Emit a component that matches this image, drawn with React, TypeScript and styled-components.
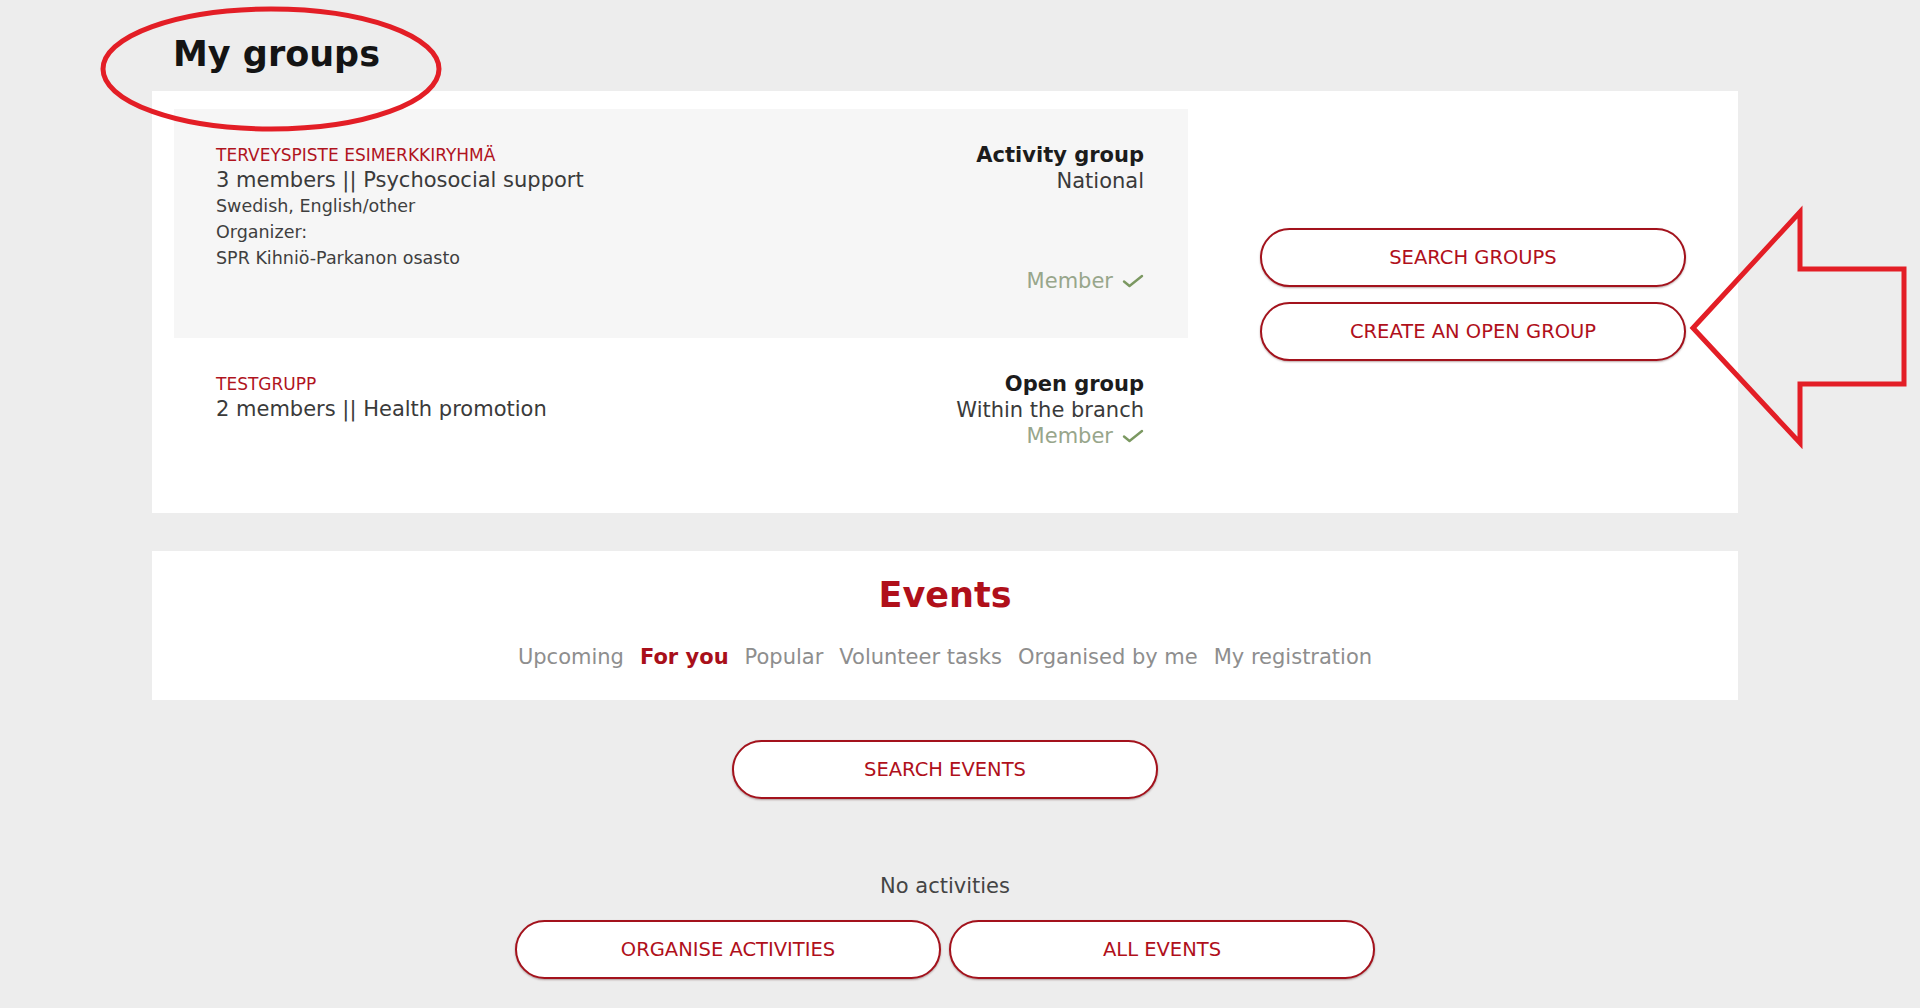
import styled, { createGlobalStyle } from 'styled-components';

const GlobalStyle = createGlobalStyle`
  html, body {
    margin: 0;
    padding: 0;
    background: #ededed;
  }
  body {
    font-family: "DejaVu Sans", "Liberation Sans", sans-serif;
    color: #3a3a3a;
  }
  * { box-sizing: border-box; }
`

const Page = styled.div`
  position: relative;
  width: 1920px;
  min-height: 1008px;
  padding: 34px 0 0 152px;
`

const Content = styled.div`
  width: 1586px;
`

const PageTitle = styled.h1`
  margin: 0 0 16px 21px;
  font-size: 35px;
  line-height: 41px;
  font-weight: 700;
  color: #141414;
`

const GroupsPanel = styled.section`
  display: flex;
  align-items: flex-start;
  gap: 72px;
  padding: 18px 52px 20px 22px;
  background: #fff;
`

const GroupList = styled.div`
  width: 1014px;
  display: flex;
  flex-direction: column;
`

const GroupCard = styled.div<{ $highlight?: boolean }>`
  display: flex;
  justify-content: space-between;
  padding: 32px 44px 44px 42px;
  background: ${p => (p.$highlight ? '#f6f6f6' : 'transparent')};
`

const GroupInfo = styled.div`
  display: flex;
  flex-direction: column;
  padding-top: 2px;
`

const GroupName = styled.div`
  font-size: 17px;
  line-height: 25px;
  color: #b0141e;
  text-transform: uppercase;
`

const GroupMain = styled.div`
  font-size: 21px;
  line-height: 25px;
  color: #3a3a3a;
`

const GroupDetail = styled.div`
  font-size: 17.5px;
  line-height: 26px;
  color: #3f3f3f;
`

const GroupMeta = styled.div`
  display: flex;
  flex-direction: column;
  align-items: flex-end;
  padding-top: 1px;
  text-align: right;
`

const GroupType = styled.div`
  font-size: 21px;
  line-height: 26px;
  font-weight: 700;
  color: #1c1c1c;
`

const GroupScope = styled.div`
  font-size: 21px;
  line-height: 26px;
  color: #3a3a3a;
`

const MemberBadge = styled.div<{ $offset?: number }>`
  display: flex;
  align-items: center;
  gap: 9px;
  margin-top: ${p => p.$offset ?? 0}px;
  font-size: 21px;
  line-height: 26px;
  color: #98a68b;
`

const ButtonColumn = styled.div`
  display: flex;
  flex-direction: column;
  gap: 15px;
  padding-top: 119px;
`

const PillButton = styled.button`
  width: 426px;
  height: 59px;
  border: 2px solid #a3121c;
  border-radius: 30px;
  background: #fff;
  box-shadow: 0 1px 2px rgba(60, 0, 0, 0.35);
  color: #b0101b;
  font-family: "DejaVu Sans", "Liberation Sans", sans-serif;
  font-size: 19.5px;
  text-transform: uppercase;
  cursor: pointer;
`

const EventsPanel = styled.section`
  margin-top: 38px;
  padding: 24px 0 30px;
  background: #fff;
  text-align: center;
`

const EventsTitle = styled.h2`
  margin: 0 0 28px;
  font-size: 35px;
  line-height: 41px;
  font-weight: 700;
  color: #b0101a;
`

const Tabs = styled.nav`
  display: flex;
  justify-content: center;
  gap: 16px;
`

const Tab = styled.span<{ $active?: boolean }>`
  font-size: 21px;
  line-height: 26px;
  font-weight: ${p => (p.$active ? 700 : 400)};
  color: ${p => (p.$active ? '#a80f1a' : '#8e8e8e')};
  cursor: pointer;
`

const CenterRow = styled.div<{ $top: number }>`
  display: flex;
  justify-content: center;
  gap: 8px;
  margin-top: ${p => p.$top}px;
`

const EmptyText = styled.div`
  margin-top: 74px;
  text-align: center;
  font-size: 21px;
  line-height: 26px;
  color: #444;
`

const Annotations = styled.svg`
  position: absolute;
  top: 0;
  left: 0;
  pointer-events: none;
`

const Check = () => (
  <svg width="22" height="14" viewBox="0 0 22 14">
    <path d="M2 7.5 L7.5 12 L20 2" fill="none" stroke="#7b9861" strokeWidth="2.4" strokeLinecap="round" strokeLinejoin="round" />
  </svg>
)

const tabs = ['Upcoming', 'For you', 'Popular', 'Volunteer tasks', 'Organised by me', 'My registration']

export default function App() {
  return (
    <Page>
      <GlobalStyle />
      <Content>
        <PageTitle>My groups</PageTitle>
        <GroupsPanel>
          <GroupList>
            <GroupCard $highlight>
              <GroupInfo>
                <GroupName>Terveyspiste esimerkkiryhmä</GroupName>
                <GroupMain>3 members || Psychosocial support</GroupMain>
                <GroupDetail>Swedish, English/other</GroupDetail>
                <GroupDetail>Organizer:</GroupDetail>
                <GroupDetail>SPR Kihniö-Parkanon osasto</GroupDetail>
              </GroupInfo>
              <GroupMeta>
                <GroupType>Activity group</GroupType>
                <GroupScope>National</GroupScope>
                <MemberBadge $offset={74}>Member <Check /></MemberBadge>
              </GroupMeta>
            </GroupCard>
            <GroupCard>
              <GroupInfo>
                <GroupName>Testgrupp</GroupName>
                <GroupMain>2 members || Health promotion</GroupMain>
              </GroupInfo>
              <GroupMeta>
                <GroupType>Open group</GroupType>
                <GroupScope>Within the branch</GroupScope>
                <MemberBadge>Member <Check /></MemberBadge>
              </GroupMeta>
            </GroupCard>
          </GroupList>
          <ButtonColumn>
            <PillButton>Search groups</PillButton>
            <PillButton>Create an open group</PillButton>
          </ButtonColumn>
        </GroupsPanel>

        <EventsPanel>
          <EventsTitle>Events</EventsTitle>
          <Tabs>
            {tabs.map(t => (
              <Tab key={t} $active={t === 'For you'}>{t}</Tab>
            ))}
          </Tabs>
        </EventsPanel>

        <CenterRow $top={40}>
          <PillButton>Search events</PillButton>
        </CenterRow>
        <EmptyText>No activities</EmptyText>
        <CenterRow $top={21}>
          <PillButton>Organise activities</PillButton>
          <PillButton>All events</PillButton>
        </CenterRow>
      </Content>

      {/* red markup drawn over the screenshot */}
      <Annotations width="1920" height="1008" viewBox="0 0 1920 1008">
        <ellipse cx="271" cy="69" rx="168" ry="60" fill="none" stroke="#e31e26" strokeWidth="5" />
        <polygon
          points="1693,328 1800,212 1800,269 1904,269 1904,384 1800,384 1800,443"
          fill="none"
          stroke="#e31e26"
          strokeWidth="5"
          strokeLinejoin="miter"
        />
      </Annotations>
    </Page>
  );
}
